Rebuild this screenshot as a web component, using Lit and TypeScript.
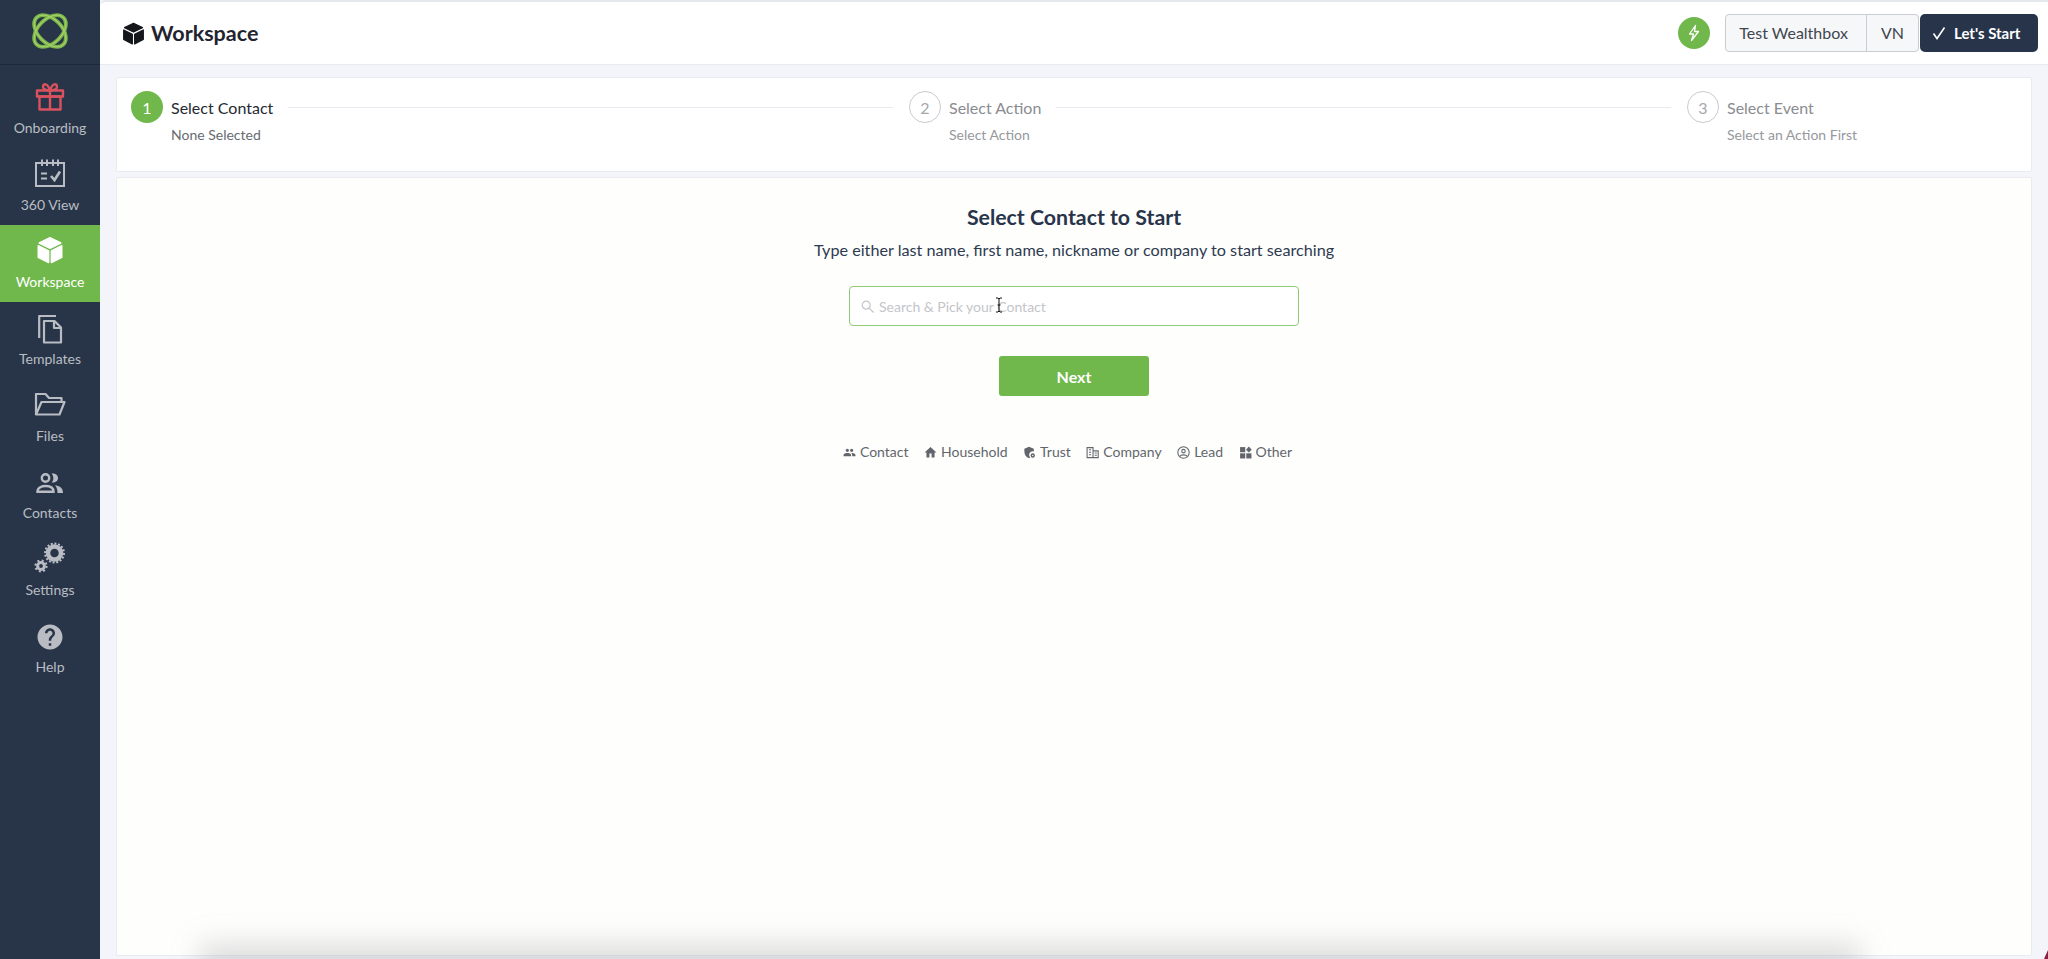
import { LitElement, html, css, svg } from "lit";
import { customElement } from "lit/decorators.js";

const icon = (w: number, h: number, vb: string, body: unknown, cls = "") =>
  html`<svg class=${cls} width=${w} height=${h} viewBox=${vb} aria-hidden="true">${body}</svg>`;

const cube = svg`<g stroke="currentColor" stroke-width="1.2" stroke-linejoin="round" fill="currentColor"><path d="M12 2.2 20.6 6.4 12 10.6 3.4 6.4Z"/><path d="M2.6 8.6 10.9 12.7V22L2.6 17.8Z"/><path d="M21.4 8.6 13.1 12.7V22L21.4 17.8Z"/></g>`;

const navIcons: Record<string, unknown> = {
  Onboarding: icon(32, 32, "0 0 32 32", svg`<g fill="none" stroke="#d9525e" stroke-width="2.4" stroke-linejoin="round"><rect x="3" y="10.5" width="26" height="6"/><rect x="5.5" y="16.5" width="21" height="13"/><path d="M16 10.5V29.5M16 10.5C12 10.5 9 9.5 9 6.5 9 3.5 13.5 2.5 16 10.5ZM16 10.5C20 10.5 23 9.5 23 6.5 23 3.5 18.5 2.5 16 10.5Z"/></g>`),
  "360 View": icon(32, 30, "0 0 32 30", svg`<g fill="none" stroke="currentColor" stroke-width="2"><path d="M2 5H30V28H2Z"/><path d="M8 1.5V8M13 1.5V8M19 1.5V8M24 1.5V8"/><path d="M7 15.5H13M7 20.5H13"/><path d="M17 18 20.5 22 26 13.5" stroke-width="2.6"/></g>`),
  Workspace: icon(30, 30, "0 0 24 24", cube),
  Templates: icon(26, 30, "0 0 26 30", svg`<g fill="none" stroke="currentColor" stroke-width="2.2" stroke-linejoin="round"><path d="M19 2H2.2V24"/><path d="M7 7H17.5L24 13.5V28.5H7Z"/><path d="M17 7V14H24" /></g>`),
  Files: icon(32, 24, "0 0 32 24", svg`<g fill="none" stroke="currentColor" stroke-width="2.2" stroke-linejoin="round"><path d="M2 22.5V2H11.5L15 6H27.5V10"/><path d="M2 22.5H25.5L30.5 10H7.5L2 22.5Z"/></g>`),
  Contacts: icon(28, 22, "0 0 28 22", svg`<g fill="none" stroke="currentColor" stroke-width="2.4"><circle cx="9.5" cy="6" r="3.7"/><path d="M1.5 19.8C1.5 15.5 6 14 9.8 14 14 14 17.5 15.5 17.5 19.8Z"/></g><g fill="currentColor"><path d="M15.5 1.5C20 1 22 3.5 22 6 22 9 19.5 11 15.5 10.5 18 8.5 18 4 15.5 1.5Z"/><path d="M19 13.5C23 13.5 27 15.5 27 21H21.5C21.5 18 21 15.5 19 13.5Z"/></g>`),
  Settings: icon(32, 32, "0 0 32 32", svg`<g fill="none" stroke="currentColor"><circle cx="20.5" cy="11" r="6.5" stroke-width="4.5"/><circle cx="20.5" cy="11" r="9.5" stroke-width="2" stroke-dasharray="2 1.7"/><circle cx="7" cy="24" r="3.4" stroke-width="3"/><circle cx="7" cy="24" r="5.6" stroke-width="2" stroke-dasharray="2 2.4"/></g>`),
  Help: icon(30, 30, "0 0 24 24", svg`<path fill="currentColor" d="M12 2C6.48 2 2 6.48 2 12s4.48 10 10 10 10-4.48 10-10S17.52 2 12 2zm1 17h-2v-2h2v2zm2.07-7.75l-.9.92C13.45 12.9 13 13.5 13 15h-2v-.5c0-1.1.45-2.1 1.17-2.83l1.24-1.26c.37-.36.59-.86.59-1.41 0-1.1-.9-2-2-2s-2 .9-2 2H8c0-2.21 1.79-4 4-4s4 1.79 4 4c0 .88-.36 1.68-.93 2.25z"/>`),
};

const legendIcons: Record<string, unknown> = {
  Contact: icon(13, 13, "0 0 24 24", svg`<path fill="currentColor" d="M16 11c1.66 0 2.99-1.34 2.99-3S17.66 5 16 5c-1.66 0-3 1.34-3 3s1.34 3 3 3zm-8 0c1.66 0 2.99-1.34 2.99-3S9.66 5 8 5C6.34 5 5 6.34 5 8s1.34 3 3 3zm0 2c-2.33 0-7 1.17-7 3.5V19h14v-2.5c0-2.33-4.67-3.5-7-3.5zm8 0c-.29 0-.62.02-.97.05 1.16.84 1.97 1.97 1.97 3.45V19h6v-2.5c0-2.33-4.67-3.5-7-3.5z"/>`),
  Household: icon(13, 13, "0 0 24 24", svg`<path fill="currentColor" d="M10 21v-7h4v7h5.5v-9H23L12 2 1 12h3.5v9z"/>`),
  Trust: icon(13, 13, "0 0 24 24", svg`<path fill="currentColor" d="M11 1.5 20 5v5a7 7 0 0 0-7 11.5l-2 1C6 20.5 2.5 16 2.5 10V5Z"/><circle cx="18" cy="17.5" r="4" fill="currentColor"/><circle cx="18" cy="17.5" r="1.3" fill="#fff"/>`),
  Company: icon(13, 13, "0 0 24 24", svg`<g fill="none" stroke="currentColor" stroke-width="2"><path d="M2 21.5V3H13V21.5ZM13 9H22.5V21.5H13"/><path d="M5.5 7H9.5M5.5 11.5H9.5M5.5 16H9.5M16 13H20M16 17H20"/></g>`),
  Lead: icon(13, 13, "0 0 24 24", svg`<g fill="none" stroke="currentColor" stroke-width="2"><circle cx="12" cy="12" r="10.5"/><circle cx="12" cy="9.5" r="3.2"/><path d="M5.5 19C7 15.5 17 15.5 18.5 19"/></g>`),
  Other: icon(13, 13, "0 0 24 24", svg`<g fill="currentColor"><rect x="2" y="2" width="9.5" height="9.5"/><rect x="2" y="13.5" width="9.5" height="9.5"/><rect x="13.5" y="13.5" width="9.5" height="9.5"/><path d="M18.2 1 23.5 6.8 18.2 12 13 6.8Z"/></g>`),
};

@customElement("app-root")
export class AppRoot extends LitElement {
  static styles = css`
    :host { display: block; height: 959px; overflow: hidden; position: relative; font-family: Lato, "Liberation Sans", sans-serif; color: #27344a; }
    * { box-sizing: border-box; }
    .shell { display: flex; height: 959px; background: #f3f5fa; }
    .side { width: 100px; flex: none; background: #283548; color: #b9bdc3; display: flex; flex-direction: column; }
    .logo { height: 65px; display: flex; align-items: center; justify-content: center; margin-bottom: 6px; border-bottom: 1px solid #1d2839; padding-bottom: 2px; }
    .nav { height: 77px; display: flex; flex-direction: column; align-items: center; padding-top: 8px; font-size: 14px; line-height: 20px; }
    .nav .ic { height: 34px; display: flex; align-items: center; justify-content: center; margin-bottom: 5px; }
    .nav.on { background: #70b84b; color: #fff; }
    .nudge .ic { transform: translateY(2px); }
    .main { flex: 1; min-width: 0; display: flex; flex-direction: column; }
    .top { height: 65px; background: #fff; border-top: 2px solid #e6e8ef; border-bottom: 1px solid #e8ebf2; display: flex; align-items: center; padding: 0 10px 0 21px; border-top-left-radius: 6px; }
    .brand { display: flex; align-items: center; gap: 5px; font-size: 21.5px; font-weight: 700; color: #1f2530; flex: 1; }
    .brand svg { color: #14171c; }
    .bolt { width: 32px; height: 32px; border-radius: 50%; background: #70b84b; display: flex; align-items: center; justify-content: center; margin-right: 15px; }
    .group { display: flex; height: 38px; border: 1px solid #c9ccd1; border-radius: 4px; background: #f6f7f8; font-size: 16px; color: #3f4650; align-items: center; }
    .group span { padding: 0 18px 0 13.5px; line-height: 36px; }
    .group span + span { border-left: 1px solid #c9ccd1; padding: 0 14px; }
    .start { margin-left: 1px; height: 38px; width: 118px; background: #27344a; color: #fff; border-radius: 5px; display: flex; align-items: center; gap: 8px; padding-left: 12px; font-size: 15px; font-weight: 700; }
    .body { flex: 1; display: flex; flex-direction: column; gap: 5px; padding: 12px 16px 3px; min-height: 0; }
    .steps { height: 95px; flex: none; background: #fff; border: 1px solid #e9ebf1; border-radius: 2px; padding: 13px 14px 0; display: grid; grid-template-columns: 778px 778px 1fr; }
    .step { display: grid; grid-template-columns: 32px auto 1fr; column-gap: 8px; grid-template-rows: 32px auto; align-items: center; align-content: start; }
    .num { width: 32px; height: 32px; border-radius: 50%; display: flex; align-items: center; justify-content: center; border: 1.5px solid #c9cbd0; color: #a6a8ad; font-size: 16px; }
    .title { font-size: 16px; color: #8a8c91; }
    .line { height: 1px; background: #e9ebf1; margin: 0 16px 0 7px; }
    .sub { grid-column: 2 / 4; font-size: 14px; color: #96989d; line-height: 20px; margin-top: 2px; }
    .step.on .num { background: #70b84b; border: 0; color: #fff; }
    .step.on .title { color: #252a33; }
    .step.on .sub { color: #666a71; }
    .card { flex: 1; background: #fefefd; border: 1px solid #e9ebf1; border-radius: 2px; display: flex; flex-direction: column; align-items: center; padding-top: 25px; }
    h1 { margin: 0; font-size: 21.3px; line-height: 28px; font-weight: 700; color: #27344a; }
    p { margin: 7px 0 0; font-size: 16.2px; line-height: 24px; color: #2d3a4f; }
    .search { position: relative; margin-top: 24px; width: 450px; height: 40px; border: 1.5px solid #8fcb74; border-radius: 4px; display: flex; align-items: center; gap: 5px; padding-left: 11px; font-size: 14px; color: #c3c5c9; background: #fff; }
    .cursor { position: absolute; left: 145px; top: 10px; }
    .next { margin-top: 30px; width: 150px; height: 40px; border-radius: 3px; background: #70b84b; color: #fff; font-weight: 700; font-size: 16px; display: flex; align-items: center; justify-content: center; }
    .legend { display: flex; margin-top: 46px; padding-right: 13px; font-size: 14px; line-height: 20px; color: #62666c; gap: 15.5px; }
    .legend div { display: flex; align-items: center; gap: 4px; }
    .haze { position: absolute; left: 200px; width: 1660px; bottom: -24px; height: 40px; background: rgba(120,122,125,.24); filter: blur(14px); pointer-events: none; }
    .corner { position: absolute; right: 0; bottom: 0; pointer-events: none; display: block; }
  `;

  render() {
    const nav = ["Onboarding", "360 View", "Workspace", "Templates", "Files", "Contacts", "Settings", "Help"];
    const nudged = ["Templates", "Help", "Contacts"];
    const steps = [
      ["1", "Select Contact", "None Selected"],
      ["2", "Select Action", "Select Action"],
      ["3", "Select Event", "Select an Action First"],
    ];
    return html`
      <div class="shell">
        <aside class="side">
          <div class="logo">
            ${icon(38, 38, "0 0 40 40", svg`<g fill="none"><g stroke="#7ab548" stroke-width="4"><ellipse cx="20" cy="20" rx="20" ry="12.5" transform="rotate(45 20 20)"/><ellipse cx="20" cy="20" rx="20" ry="12.5" transform="rotate(-45 20 20)"/></g><g stroke="#a6d06d" stroke-width="1.2"><ellipse cx="20" cy="20" rx="20" ry="12.5" transform="rotate(45 20 20)"/><ellipse cx="20" cy="20" rx="20" ry="12.5" transform="rotate(-45 20 20)"/></g></g>`)}
          </div>
          ${nav.map(n => html`<div class="nav ${n === "Workspace" ? "on" : ""} ${nudged.includes(n) ? "nudge" : ""}"><div class="ic">${navIcons[n]}</div>${n}</div>`)}
        </aside>
        <div class="main">
          <header class="top">
            <div class="brand">${icon(25, 25, "0 0 24 24", cube)}Workspace</div>
            <div class="bolt">${icon(18, 18, "0 0 18 18", svg`<path d="M10.5 1.5 4.5 10H8.5L6.5 16.5 13.5 7.5H9.5Z" fill="none" stroke="#fff" stroke-width="1.3" stroke-linejoin="round"/>`)}</div>
            <div class="group"><span>Test Wealthbox</span><span>VN</span></div>
            <div class="start">${icon(14, 14, "0 0 14 14", svg`<path d="M1.5 7.5 5 12.5 12.5 1.5" fill="none" stroke="#fff" stroke-width="1.6"/>`)}Let's Start</div>
          </header>
          <div class="body">
            <section class="steps">
              ${steps.map((s, i) => html`<div class="step ${i === 0 ? "on" : ""}">
                <div class="num">${s[0]}</div><div class="title">${s[1]}</div>
                ${i < 2 ? html`<div class="line"></div>` : html`<div></div>`}
                <div></div><div class="sub">${s[2]}</div>
              </div>`)}
            </section>
            <section class="card">
              <h1>Select Contact to Start</h1>
              <p>Type either last name, first name, nickname or company to start searching</p>
              <div class="search">
                ${icon(13, 13, "0 0 13 13", svg`<g fill="none" stroke="#c3c5c9" stroke-width="1.2"><circle cx="5.2" cy="5.2" r="4"/><path d="M8.2 8.2 12.5 12.5"/></g>`)}
                Search &amp; Pick your Contact
                <svg class="cursor" width="8" height="16" viewBox="0 0 8 16" aria-hidden="true"><path d="M1 1H3L4 2 5 1H7M4 2V14M1 15H3L4 14 5 15H7M2.5 8H5.5" fill="none" stroke="#111" stroke-width="1"/></svg>
              </div>
              <div class="next">Next</div>
              <div class="legend">
                ${Object.keys(legendIcons).map(k => html`<div>${legendIcons[k]}${k}</div>`)}
              </div>
            </section>
          </div>
        </div>
      </div>
      <div class="haze"></div>
      <svg class="corner" width="4" height="9" viewBox="0 0 4 9" aria-hidden="true"><path d="M4 0V9H0Z" fill="#8c1f3f"/></svg>
    `;
  }
}
